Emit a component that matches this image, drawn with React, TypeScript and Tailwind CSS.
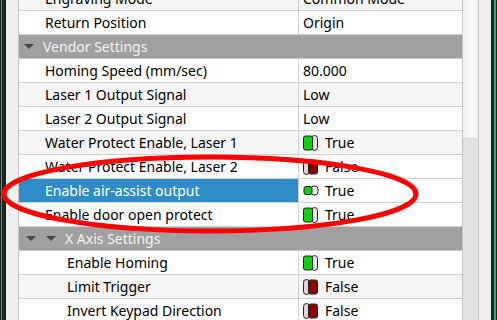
import React from 'react';

type Row =
  | { kind: 'item'; name: string; value?: string; bool?: boolean; depth: number; alt?: boolean; selected?: boolean }
  | { kind: 'group'; name: string; depth: number };

const rows: Row[] = [
  { kind: 'item', name: 'Engraving Mode', value: 'Common Mode', depth: 1, alt: true },
  { kind: 'item', name: 'Return Position', value: 'Origin', depth: 1 },
  { kind: 'group', name: 'Vendor Settings', depth: 0 },
  { kind: 'item', name: 'Homing Speed (mm/sec)', value: '80.000', depth: 1 },
  { kind: 'item', name: 'Laser 1 Output Signal', value: 'Low', depth: 1, alt: true },
  { kind: 'item', name: 'Laser 2 Output Signal', value: 'Low', depth: 1 },
  { kind: 'item', name: 'Water Protect Enable, Laser 1', bool: true, depth: 1, alt: true },
  { kind: 'item', name: 'Water Protect Enable, Laser 2', bool: false, depth: 1 },
  { kind: 'item', name: 'Enable air-assist output', bool: true, depth: 1, alt: true, selected: true },
  { kind: 'item', name: 'Enable door open protect', bool: true, depth: 1 },
  { kind: 'group', name: 'X Axis Settings', depth: 1 },
  { kind: 'item', name: 'Enable Homing', bool: true, depth: 2 },
  { kind: 'item', name: 'Limit Trigger', bool: false, depth: 2, alt: true },
  { kind: 'item', name: 'Invert Keypad Direction', bool: false, depth: 2 },
];

function Toggle({ on, small }: { on: boolean; small?: boolean }) {
  if (small) {
    return (
      <svg width="16" height="11" viewBox="0 0 16 11" className="shrink-0">
        <rect x="8" y="1" width="7" height="9" rx="3" fill="#e2e8e2" stroke="#222" />
        <rect x="1" y="1.5" width="8" height="8" rx="2" fill="#10d010" stroke="#222" />
      </svg>
    );
  }
  return on ? (
    <svg width="16" height="16" viewBox="0 0 16 16" className="shrink-0">
      <rect x="8.5" y="0.5" width="6" height="15" rx="3" fill="#e2e8e2" stroke="#222" />
      <rect x="0.5" y="1" width="9" height="14" rx="2" fill="#10d010" stroke="#222" />
    </svg>
  ) : (
    <svg width="16" height="16" viewBox="0 0 16 16" className="shrink-0">
      <rect x="0.5" y="0.5" width="6" height="15" rx="3" fill="#ddd4d4" stroke="#222" />
      <rect x="5.5" y="1" width="9" height="14" rx="2" fill="#8a0000" stroke="#222" />
    </svg>
  );
}

function Arrow() {
  return (
    <svg width="10" height="6" viewBox="0 0 10 6" className="shrink-0">
      <path d="M0 0 L10 0 L5 5 Z" fill="#4a4a4a" />
    </svg>
  );
}

export default function App() {
  return (
    <div
      className="w-[497px] h-[320px] overflow-hidden relative flex bg-[#1b2625]"
      style={{ fontFamily: '"Noto Sans", "Open Sans", sans-serif' }}
    >
      {/* left frame */}
      <div className="w-px bg-[#1b2625]" />
      <div className="w-px bg-[#2fa58a]" />
      <div className="w-[4px] bg-[#1b2625]" />
      <div className="w-[12px] bg-[#efefef]" />
      <div className="w-px bg-[#c4c4c4]" />

      {/* tree */}
      <div className="w-[443px] bg-white flex flex-col">
        <div className="-mt-[13px] flex flex-col">
          {rows.map((r, i) => {
            if (r.kind === 'group') {
              return (
                <div key={i} className="h-[24px] shrink-0 bg-[#a0a0a0] border-b border-[#c8c8c8] flex items-center text-[14px] text-[#f4f4f4]">
                  <div className="w-[5px]" />
                  {r.depth === 1 && (
                    <>
                      <div className="w-[2px]" />
                      <Arrow />
                      <div className="w-[10px]" />
                    </>
                  )}
                  <Arrow />
                  <span className="ml-[9px]">{r.name}</span>
                </div>
              );
            }
            const bg = r.alt ? 'bg-[#f5f5f5]' : 'bg-white';
            return (
              <div key={i} className={`h-[24px] shrink-0 flex border-b border-[#d0d0d0] ${bg} text-[14px] text-black`}>
                <div
                  className={`w-[280px] shrink-0 border-r border-[#d0d0d0] flex items-center ${
                    r.selected ? 'bg-[#308cc6] text-white' : ''
                  } ${r.depth === 2 ? 'pl-[48px]' : 'pl-[26px]'}`}
                >
                  {r.name}
                </div>
                <div className={`flex-1 flex items-center pl-[4px] ${r.selected ? 'bg-white' : ''}`}>
                  {r.bool === undefined ? (
                    <span className="pl-[0px]">{r.value}</span>
                  ) : (
                    <>
                      <Toggle on={r.bool} small={r.selected} />
                      <span className={r.selected ? 'ml-[6px]' : 'ml-[6px]'}>{r.bool ? 'True' : 'False'}</span>
                    </>
                  )}
                </div>
              </div>
            );
          })}
        </div>
      </div>

      {/* scrollbar */}
      <div className="w-px bg-[#c4c4c4]" />
      <div className="w-[15px] bg-[#e2e2e2] flex flex-col">
        <div className="h-[139px] bg-gradient-to-r from-[#f0f0f0] via-[#fafafa] to-[#f0f0f0] border-b border-[#d4d4d4]" />
      </div>
      <div className="w-px bg-[#c4c4c4]" />
      <div className="w-[12px] bg-[#efefef]" />
      <div className="w-[3px] bg-[#1b2625]" />
      <div className="w-[2px] bg-[#2fa58a]" />
      <div className="w-px bg-[#1b2625]" />

      {/* red annotation */}
      <svg className="absolute inset-0 pointer-events-none" width="497" height="320" viewBox="0 0 497 320">
        <ellipse cx="210" cy="194" rx="206" ry="37" fill="none" stroke="#ff0000" strokeWidth="5" />
      </svg>
    </div>
  );
}
